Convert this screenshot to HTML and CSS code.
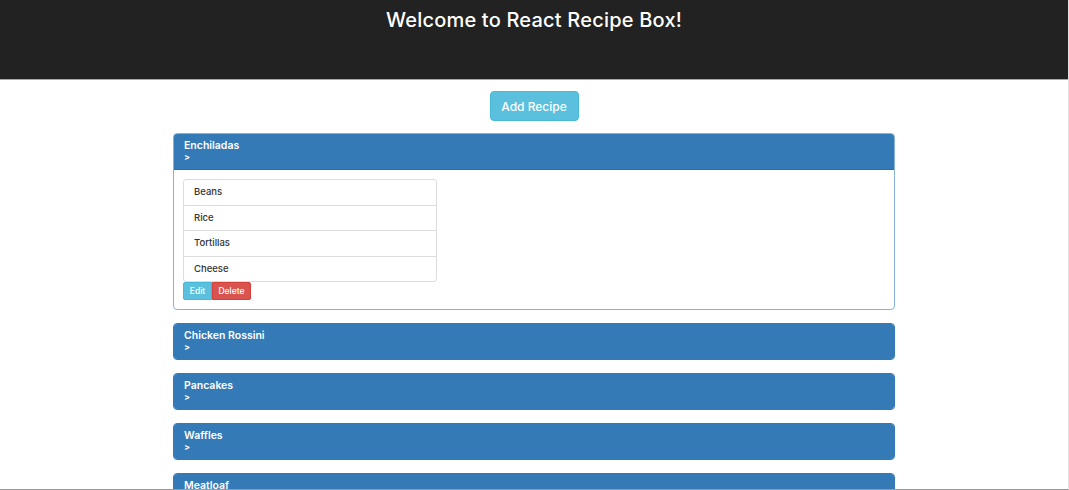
FILE: index.html
```html
<!DOCTYPE html>
<html>
<head>
<meta charset="utf-8">
<link rel="stylesheet" href="styles.css">
</head>
<body>
<header class="masthead">
  <h1 class="title">Welcome to React Recipe Box!</h1>
</header>
<main class="container">
  <div class="add-row"><button class="btn btn-add">Add Recipe</button></div>
  <div class="panel open">
    <div class="panel-heading">
      <div class="panel-title">Enchiladas</div>
      <div class="panel-caret">&gt;</div>
    </div>
    <div class="panel-body">
      <ul class="list-group">
        <li class="list-item">Beans</li>
        <li class="list-item">Rice</li>
        <li class="list-item">Tortillas</li>
        <li class="list-item">Cheese</li>
      </ul>
      <div class="btn-row">
        <button class="btn btn-xs btn-edit">Edit</button><button class="btn btn-xs btn-delete">Delete</button>
      </div>
    </div>
  </div>
  <div class="panel">
    <div class="panel-heading">
      <div class="panel-title">Chicken Rossini</div>
      <div class="panel-caret">&gt;</div>
    </div>
  </div>
  <div class="panel">
    <div class="panel-heading">
      <div class="panel-title">Pancakes</div>
      <div class="panel-caret">&gt;</div>
    </div>
  </div>
  <div class="panel">
    <div class="panel-heading">
      <div class="panel-title">Waffles</div>
      <div class="panel-caret">&gt;</div>
    </div>
  </div>
  <div class="panel">
    <div class="panel-heading">
      <div class="panel-title">Meatloaf</div>
      <div class="panel-caret">&gt;</div>
    </div>
  </div>
</main>
</body>
</html>
```
FILE: styles.css
```css
* { box-sizing: border-box; }
html, body { margin: 0; padding: 0; }
body {
  font-family: Inter, "DejaVu Sans", sans-serif;
  color: #333;
  background: #fff;
  overflow: hidden;
  height: 490px;
  border-right: 1px solid #e2e2e2;
  border-bottom: 1px solid #999;
}
.masthead {
  background: #222;
  height: 80px;
  border-bottom: 1px solid #aaa;
  display: flex;
  justify-content: center;
}
.title {
  margin: 8px 0 0;
  color: #fff;
  font-size: 20px;
  font-weight: 500;
  line-height: 24px;
  letter-spacing: 0.2px;
}
.container {
  width: 722px;
  margin: 0 auto;
}
.add-row {
  display: flex;
  justify-content: center;
  padding-top: 11px;
  margin-bottom: 12px;
}
.btn {
  font-family: inherit;
  border: 1px solid transparent;
  color: #fff;
  cursor: pointer;
}
.btn-add {
  background: #5bc0de;
  border-color: #46b8da;
  border-radius: 4px;
  width: 89px;
  height: 30px;
  font-size: 12px;
  font-weight: 500;
  padding: 0;
}
.panel {
  border: 1px solid #337ab7;
  border-radius: 4px;
  margin-bottom: 13px;
  overflow: hidden;
}
.panel.open { border-color: #88b2dc; }
.panel-heading {
  background: #337ab7;
  color: #fff;
  padding: 6px 10px 5px;
  height: 35px;
  font-size: 10.5px;
  font-weight: 600;
  line-height: 11px;
}
.panel.open .panel-heading { border-bottom: 1px solid #2e6da4; height: 36px; }
.panel-caret { font-size: 9px; line-height: 11px; font-weight: 600; }
.panel-body {
  padding: 9px 9px 9px;
}
.list-group {
  list-style: none;
  margin: 0;
  padding: 0;
  width: 254px;
}
.list-item {
  border: 1px solid #ddd;
  margin-bottom: -1px;
  padding: 0 10px;
  height: 26.5px;
  line-height: 24px;
  font-size: 9.5px;
  font-weight: 500;
  color: #333;
  background: #fff;
}
.list-item:first-child { border-radius: 3px 3px 0 0; }
.list-item:last-child { border-radius: 0 0 3px 3px; margin-bottom: 0; }
.btn-row { display: flex; }
.btn-xs {
  height: 18px;
  font-size: 8.5px;
  font-weight: 500;
  padding: 0;
}
.btn-edit {
  background: #5bc0de;
  border-color: #46b8da;
  width: 29px;
  border-radius: 2px 0 0 2px;
}
.btn-delete {
  background: #d9534f;
  border-color: #d43f3a;
  width: 39px;
  border-radius: 0 2px 2px 0;
}
```
